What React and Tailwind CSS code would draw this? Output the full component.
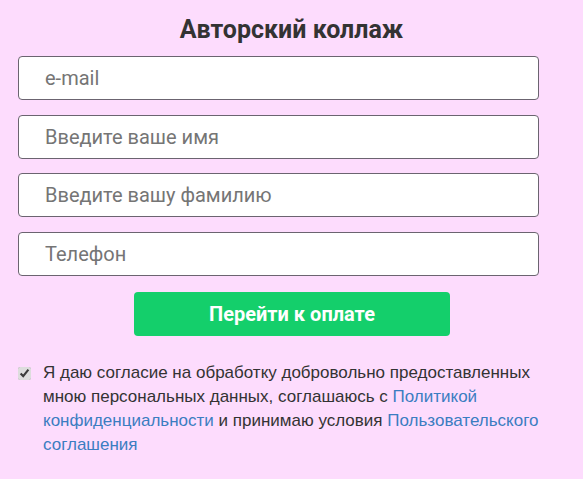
export default function App() {
  const fields = ["e-mail", "Введите ваше имя", "Введите вашу фамилию", "Телефон"];
  return (
    <div className="w-[583px] h-[479px] bg-[#fddcfd] overflow-hidden" style={{ fontFamily: "Roboto, sans-serif" }}>
      <h1 className="pt-[13px] text-center text-[25px] leading-[34px] font-bold text-[#333333]">
        Авторский коллаж
      </h1>

      <form className="mt-[9px] ml-[18px] w-[521px] flex flex-col gap-[14.5px]">
        {fields.map((f) => (
          <input
            key={f}
            type="text"
            placeholder={f}
            className="h-[44px] w-full bg-white border border-[#6b6470] rounded-[4px] pl-[26px] text-[20px] text-[#333] placeholder:text-[#757575] outline-none"
          />
        ))}
      </form>

      <div className="mt-[16px] flex justify-center">
        <button className="ml-[1px] w-[316px] h-[44px] bg-[#14cf6b] rounded-[4px] text-white text-[20px] font-bold">
          Перейти к оплате
        </button>
      </div>

      <div
        className="mt-[25px] ml-[18px] flex gap-[12px] text-[17px] leading-[24px] text-[#333333] whitespace-nowrap"
        style={{ fontFamily: '"Liberation Sans", Arial, sans-serif' }}
      >
        <input type="checkbox" defaultChecked className="mt-[6px] w-[13px] h-[13px] shrink-0 accent-[#dddddd]" />
        <p>
          Я даю согласие на обработку добровольно предоставленных
          <br />
          мною персональных данных, соглашаюсь с <a className="text-[#3b7dc1]">Политикой</a>
          <br />
          <a className="text-[#3b7dc1]">конфиденциальности</a> и принимаю условия{" "}
          <a className="text-[#3b7dc1]">Пользовательского</a>
          <br />
          <a className="text-[#3b7dc1]">соглашения</a>
        </p>
      </div>
    </div>
  );
}
